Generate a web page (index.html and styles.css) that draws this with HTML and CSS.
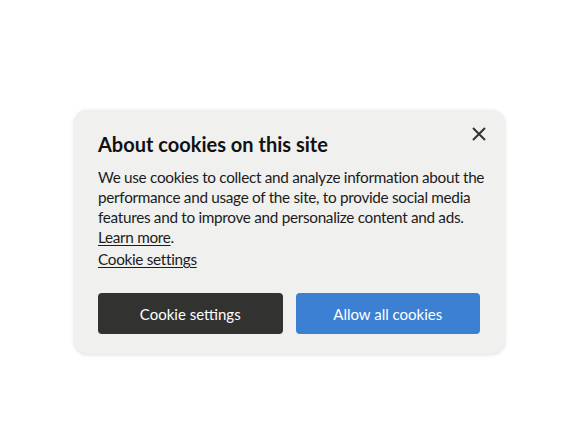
FILE: index.html
```html
<!DOCTYPE html>
<html lang="en">
<head>
<meta charset="utf-8">
<link rel="stylesheet" href="styles.css">
</head>
<body>
<div class="page">
  <div class="card">
    <div class="head">
      <h1 class="title">About cookies on this site</h1>
      <button class="close" aria-label="Close">
        <svg width="14" height="14" viewBox="0 0 14 14"><path d="M1 1L13 13M13 1L1 13" stroke="#333" stroke-width="2" stroke-linecap="butt"/></svg>
      </button>
    </div>
    <p class="text">We use cookies to collect and analyze information about the performance and usage of the site, to provide social media features and to improve and personalize content and ads. <a class="link" href="#">Learn more</a>.</p>
    <a class="link settings" href="#">Cookie settings</a>
    <div class="actions">
      <button class="btn btn-dark">Cookie settings</button>
      <button class="btn btn-blue">Allow all cookies</button>
    </div>
  </div>
</div>
</body>
</html>
```
FILE: styles.css
```css
html, body { margin: 0; padding: 0; background: #ffffff; }
body { font-family: Lato, "Noto Sans", sans-serif; color: #1a1a1a; }
.page { width: 578px; height: 432px; padding-top: 110px; padding-left: 74px; box-sizing: border-box; }
.card {
  width: 431px;
  height: 244px;
  box-sizing: border-box;
  background: #f0f0ef;
  border-radius: 14px;
  box-shadow: 0 1px 4px rgba(0,0,0,0.12), 0 0 1px rgba(0,0,0,0.08);
  padding: 16px 25px 0 24px;
  display: flex;
  flex-direction: column;
}
.head { display: flex; justify-content: space-between; align-items: flex-start; }
.title { margin: 4px 0 0 0; font-size: 20px; font-weight: 700; color: #111; line-height: 28px; }
.close { background: none; border: 0; padding: 0; margin: 1px -6px 0 0; width: 14px; height: 14px; cursor: pointer; display: flex; }
.text { margin: 9px -14px 0 0; font-size: 15.3px; line-height: 20px; color: #1c1c1c; letter-spacing: -0.3px; }
.link { color: #1c1c1c; text-decoration: underline; text-underline-offset: 2px; }
.settings { font-size: 15.3px; line-height: 20px; margin-top: 2px; align-self: flex-start; letter-spacing: -0.3px; }
.actions { display: flex; gap: 13px; margin-top: 24px; }
.btn {
  flex: 1;
  height: 41px;
  border: 0;
  border-radius: 4px;
  font-family: Lato, "Noto Sans", sans-serif;
  font-size: 15px;
  color: #fff;
  cursor: pointer;
}
.btn-dark { background: #323230; }
.btn-blue { background: #3b80d2; }
```
